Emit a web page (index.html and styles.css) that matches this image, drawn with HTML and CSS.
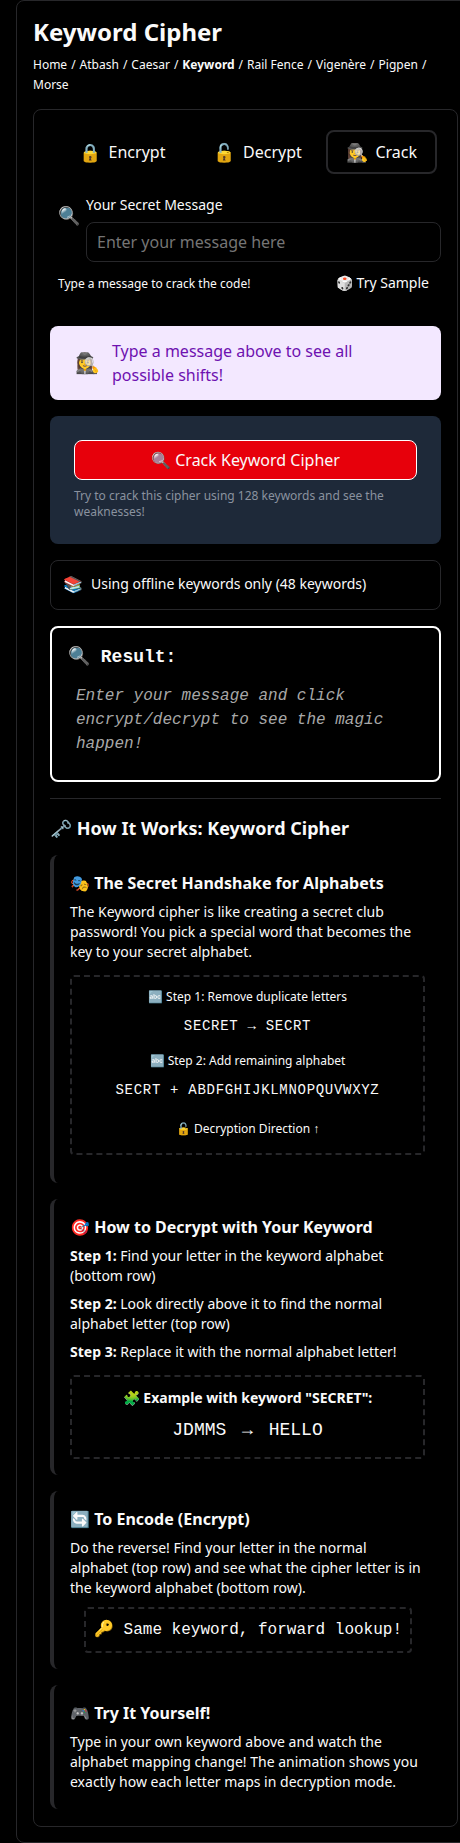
FILE: index.html
```html
<!DOCTYPE html>
<html lang="en">
<head>
<meta charset="utf-8">
<title>Keyword Cipher</title>
<link rel="stylesheet" href="styles.css">
</head>
<body>
<main class="page">
  <h1 class="title">Keyword Cipher</h1>
  <nav class="crumbs">
    <span>Home</span><span>/</span><span>Atbash</span><span>/</span><span>Caesar</span><span>/</span><b>Keyword</b><span>/</span><span>Rail Fence</span><span>/</span><span>Vigenère</span><span>/</span><span>Pigpen</span><span>/</span><span>Morse</span>
  </nav>
  <div class="panel">
    <div class="tabs">
      <button class="tab tab-encrypt"><span class="tab-icon">🔒</span><span>Encrypt</span></button>
      <button class="tab"><span class="tab-icon">🔓</span><span>Decrypt</span></button>
      <button class="tab active"><span class="tab-icon">🕵️‍♀️</span><span>Crack</span></button>
    </div>
    <div class="message">
      <span class="message-icon">🔍</span>
      <div class="field">
        <label class="label" for="msg">Your Secret Message</label>
        <input class="input" id="msg" placeholder="Enter your message here">
      </div>
    </div>
    <div class="hint-row">
      <span class="hint">Type a message to crack the code!</span>
      <span class="sample">🎲 Try Sample</span>
    </div>
    <div class="notice"><span class="notice-icon">🕵️‍♀️</span><span>Type a message above to see all possible shifts!</span></div>
    <div class="crack">
      <button class="crack-button">🔍 Crack Keyword Cipher</button>
      <p class="crack-note">Try to crack this cipher using 128 keywords and see the weaknesses!</p>
    </div>
    <div class="offline"><span class="offline-icon">📚</span><span>Using offline keywords only (48 keywords)</span></div>
    <div class="result">
      <h2 class="result-title">🔍 Result:</h2>
      <p class="result-text">Enter your message and click encrypt/decrypt to see the magic happen!</p>
    </div>
    <h2 class="how">🗝️ How It Works: Keyword Cipher</h2>
    <section class="card card-handshake">
      <h3>🎭 The Secret Handshake for Alphabets</h3>
      <p>The Keyword cipher is like creating a secret club password! You pick a special word that becomes the key to your secret alphabet.</p>
      <div class="dashed steps">
        <div class="step">🔤 Step 1: Remove duplicate letters</div>
        <div class="code">SECRET → SECRT</div>
        <div class="step">🔤 Step 2: Add remaining alphabet</div>
        <div class="code">SECRT + ABDFGHIJKLMNOPQUVWXYZ</div>
        <div class="step direction">🔓 Decryption Direction ↑</div>
      </div>
    </section>
    <section class="card card-decrypt">
      <h3>🎯 How to Decrypt with Your Keyword</h3>
      <p><b>Step 1:</b> Find your letter in the keyword alphabet (bottom row)</p>
      <p><b>Step 2:</b> Look directly above it to find the normal alphabet letter (top row)</p>
      <p><b>Step 3:</b> Replace it with the normal alphabet letter!</p>
      <div class="dashed example">
        <div class="example-title">🧩 Example with keyword "SECRET":</div>
        <div class="example-code">JDMMS <span class="arrow">→</span> HELLO</div>
      </div>
    </section>
    <section class="card card-encode">
      <h3>🔄 To Encode (Encrypt)</h3>
      <p>Do the reverse! Find your letter in the normal alphabet (top row) and see what the cipher letter is in the keyword alphabet (bottom row).</p>
      <div class="dashed lookup">🔑 Same keyword, forward lookup!</div>
    </section>
    <section class="card card-try">
      <h3>🎮 Try It Yourself!</h3>
      <p>Type in your own keyword above and watch the alphabet mapping change! The animation shows you exactly how each letter maps in decryption mode.</p>
    </section>
  </div>
</main>
</body>
</html>
```
FILE: styles.css
```css
* { box-sizing: border-box; margin: 0; padding: 0; }
html { overflow: hidden; background: #000; }
body { overflow: hidden; font: 14px/20px "Noto Sans", sans-serif; color: #fafafa; }
button, input { font: inherit; color: inherit; background: none; border: 0; }
.page { width: 475px; height: 1843px; margin-left: 16px; padding: 15px 16px 16px; border: 1px solid #27272a; border-radius: 8px; }
.title { font-size: 24px; line-height: 32px; font-weight: 700; }
.crumbs { display: flex; flex-wrap: wrap; column-gap: 4px; width: 425px; height: 40px; margin-top: 7px; font-size: 12px; }
.panel { width: 425px; height: 1718px; margin-top: 14px; padding: 16px; border: 1px solid #27272a; border-radius: 8px; }
.tabs { display: flex; justify-content: flex-end; gap: 4px; padding: 4px; }
.tab { display: flex; align-items: center; justify-content: center; gap: 7.6px; height: 44px; padding: 0 18px; border: 2px solid transparent; border-radius: 8px; font-size: 16px; }
.tab-encrypt { margin-right: 4px; }
.tab-icon { font-size: 18px; }
.active { border-color: #27272a; }
.message { display: flex; gap: 4px; margin-top: 17px; padding-left: 8px; }
.message-icon { width: 24px; padding-top: 8px; font-size: 18px; line-height: 24px; }
.field { flex: 1; }
.label { display: block; height: 27px; font-size: 14px; }
.input { display: block; width: 100%; height: 40px; padding: 0 10px; border: 1px solid #27272a; border-radius: 8px; font-size: 16px; }
.input::placeholder { color: #757575; }
.hint-row { display: flex; justify-content: space-between; align-items: center; height: 40px; margin-top: 2px; padding: 0 12px 0 8px; }
.hint { font-size: 12px; }
.sample { padding-bottom: 2px; }
.notice { display: flex; align-items: center; gap: 11px; height: 74px; margin-top: 22px; padding: 0 24px 0 25px; border-radius: 8px; background: #f3e8ff; color: #6e11b0; font-size: 16px; line-height: 24px; }
.notice-icon { flex: none; width: 26px; font-size: 20px; }
.crack { height: 128px; margin-top: 16px; padding: 24px; border-radius: 8px; background: #1e2939; }
.crack-button { display: block; width: 100%; height: 40px; border: 1px solid #fff; border-radius: 8px; background: #e7000b; font-size: 16px; }
.crack-note { margin-top: 8px; font-size: 12px; line-height: 16px; color: #8a929f; }
.offline { display: flex; align-items: center; gap: 8px; height: 50px; margin-top: 16px; padding: 0 12px 2px; border: 1px solid #27272a; border-radius: 8px; }
.offline-icon { font-size: 16px; }
.result { height: 156px; margin-top: 16px; padding: 15px 16px 16px; border: 2px solid #fff; border-radius: 8px; font-family: "Liberation Mono", monospace; }
.result-title { font-size: 18px; line-height: 28px; }
.result-text { margin: 13px 8px 0; font-size: 16px; line-height: 24px; font-style: italic; color: #a8a8a8; }
.how { height: 57px; margin-top: 16px; padding-top: 15px; border-top: 1px solid #27272a; font-size: 18px; line-height: 28px; }
.card { margin-bottom: 16px; padding: 16px; border-left: 4px solid #27272a; border-radius: 8px; }
.card h3 { margin-bottom: 7px; font-size: 16px; line-height: 24px; }
.card p { margin-bottom: 8px; }
.card-handshake { height: 328px; }
.card-decrypt { height: 276px; }
.card-encode { height: 178px; }
.card-try { height: 124px; }
.dashed { width: 355px; border: 2px dashed #27272a; border-radius: 4px; text-align: center; }
.steps { height: 180px; margin-top: 13px; padding-top: 10px; }
.step { font-size: 12px; line-height: 20px; }
.code { height: 44px; padding-top: 9px; font: 14px/20px "Liberation Mono", monospace; letter-spacing: 0.7px; }
.direction { margin-top: 4px; }
.example { height: 84px; margin-top: 13px; padding-top: 11px; }
.example-title { font-weight: 700; }
.example-code { margin-top: 8px; font: 18px/28px "Liberation Mono", monospace; }
.arrow { margin: 0 5px; }
.lookup { width: 328px; height: 46px; margin: 9px 0 0 14px; font: 16px/43px "Liberation Mono", monospace; }
```
